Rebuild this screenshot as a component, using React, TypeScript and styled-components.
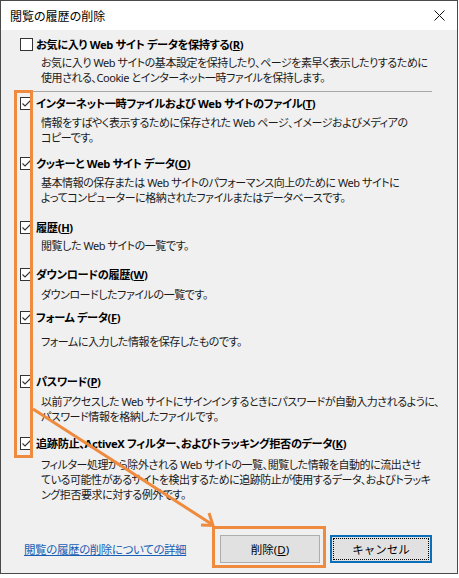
import React, { ReactElement } from 'react';
import styled, { createGlobalStyle } from 'styled-components';

const GlobalStyle = createGlobalStyle`
  html, body {
    margin: 0;
    padding: 0;
    background: #fff;
  }
  body {
    font-family: "Noto Sans", "Noto Sans CJK JP", sans-serif;
    font-feature-settings: "palt";
  }
`;

const Dialog = styled.div`
  position: relative;
  box-sizing: border-box;
  width: 458px;
  height: 574px;
  border: 1px solid #4a4a4a;
  background: #f0f0f0;
  display: flex;
  flex-direction: column;
  color: #000;
  overflow: hidden;
`;

const TitleBar = styled.div`
  height: 29px;
  background: #fff;
  display: flex;
  align-items: center;
  justify-content: space-between;
  padding: 0 12px 0 9px;
  font-size: 12px;
`;

const CloseIcon = styled.svg`
  width: 11px;
  height: 11px;
`;

const Body = styled.div`
  flex: 1;
  padding-left: 19px;
  display: flex;
  flex-direction: column;
`;

const Item = styled.div<{ $gap: number }>`
  margin-top: ${(p) => p.$gap}px;
`;

const LabelRow = styled.div`
  display: flex;
  align-items: center;
  gap: 3px;
  height: 18px;
  font-size: 11.2px;
  font-weight: 700;
  letter-spacing: -0.35px;
  white-space: nowrap;
`;

const Box = styled.span`
  box-sizing: border-box;
  flex: none;
  width: 13px;
  height: 13px;
  border: 1px solid #333;
  background: #fff;
  display: flex;
  align-items: center;
  justify-content: center;
`;

const Desc = styled.div<{ $gap: number }>`
  margin-top: ${(p) => p.$gap}px;
  padding-left: 21px;
  font-size: 11px;
  letter-spacing: -0.45px;
  line-height: 15px;
  white-space: nowrap;
  color: #1a1a1a;
`;

const Divider = styled.div`
  margin: 6px 0 0 -3px;
  width: 415px;
  height: 1px;
  background: #a8a8a8;
`;

const Footer = styled.div`
  display: flex;
  align-items: center;
  justify-content: space-between;
  padding: 0 25px 10px 23px;
`;

const HelpLink = styled.a`
  font-size: 11.5px;
  letter-spacing: -0.4px;
  color: #1a5fb4;
  text-decoration: underline;
  cursor: pointer;
`;

const Buttons = styled.div`
  display: flex;
  gap: 10px;
`;

const Button = styled.button<{ $default?: boolean }>`
  box-sizing: border-box;
  position: relative;
  width: ${(p) => (p.$default ? 102 : 100)}px;
  height: 28px;
  font-family: inherit;
  font-size: 11.5px;
  color: #000;
  background: #e1e1e1;
  border: ${(p) => (p.$default ? '2px solid #0a6eb8' : '1px solid #adadad')};
  padding: 0;
  &::after {
    content: '';
    display: ${(p) => (p.$default ? 'block' : 'none')};
    position: absolute;
    inset: 1px;
    border: 1px dotted #000;
  }
`;

const Overlay = styled.svg`
  position: absolute;
  left: -1px;
  top: -1px;
  width: 458px;
  height: 574px;
  pointer-events: none;
`;

interface IItem {
  label: string;
  key: string;
  checked: boolean;
  desc: string[];
  gap: number;
  descGap: number;
}

const items: IItem[] = [
  {
    label: 'お気に入り Web サイト データを保持する',
    key: 'R',
    checked: false,
    desc: [
      'お気に入り Web サイトの基本設定を保持したり、ページを素早く表示したりするために',
      '使用される、Cookie とインターネット一時ファイルを保持します。',
    ],
    gap: 5,
    descGap: 2,
  },
  {
    label: 'インターネット一時ファイルおよび Web サイトのファイル',
    key: 'T',
    checked: true,
    desc: ['情報をすばやく表示するために保存された Web ページ、イメージおよびメディアの', 'コピーです。'],
    gap: 2,
    descGap: 3,
  },
  {
    label: 'クッキーと Web サイト データ',
    key: 'O',
    checked: true,
    desc: [
      '基本情報の保存または Web サイトのパフォーマンス向上のために Web サイトに',
      'よってコンピューターに格納されたファイルまたはデータベースです。',
    ],
    gap: 9,
    descGap: 3,
  },
  { label: '履歴', key: 'H', checked: true, desc: ['閲覧した Web サイトの一覧です。'], gap: 13, descGap: 2 },
  {
    label: 'ダウンロードの履歴',
    key: 'W',
    checked: true,
    desc: ['ダウンロードしたファイルの一覧です。'],
    gap: 12,
    descGap: 4,
  },
  { label: 'フォーム データ', key: 'F', checked: true, desc: ['フォームに入力した情報を保存したものです。'], gap: 6, descGap: 8 },
  {
    label: 'パスワード',
    key: 'P',
    checked: true,
    desc: [
      '以前アクセスした Web サイトにサインインするときにパスワードが自動入力されるように、',
      'パスワード情報を格納したファイルです。',
    ],
    gap: 23,
    descGap: 4,
  },
  {
    label: '追跡防止、ActiveX フィルター、およびトラッキング拒否のデータ',
    key: 'K',
    checked: true,
    desc: [
      'フィルター処理から除外される Web サイトの一覧、閲覧した情報を自動的に流出させ',
      'ている可能性があるサイトを検出するために追跡防止が使用するデータ、およびトラッキ',
      'ング拒否要求に対する例外です。',
    ],
    gap: 10,
    descGap: 5,
  },
];

const Check = ({ checked }: { checked: boolean }): ReactElement => (
  <Box>
    {checked && (
      <svg width="11" height="11" viewBox="0 0 11 11">
        <polyline points="1.5,5.5 4,8 9.5,2.5" fill="none" stroke="#333" strokeWidth="1.1" />
      </svg>
    )}
  </Box>
);

const orange = '#ee8b3e';

const App = (): ReactElement => (
  <>
    <GlobalStyle />
    <Dialog>
      <TitleBar>
        <span>閲覧の履歴の削除</span>
        <CloseIcon viewBox="0 0 11 11">
          <path d="M0.5 0.5 L10.5 10.5 M10.5 0.5 L0.5 10.5" stroke="#111" strokeWidth="1" />
        </CloseIcon>
      </TitleBar>
      <Body>
        {items.map((item, i) => (
          <React.Fragment key={item.key}>
            <Item $gap={item.gap}>
              <LabelRow>
                <Check checked={item.checked} />
                <span>
                  {item.label}(<u>{item.key}</u>)
                </span>
              </LabelRow>
              <Desc $gap={item.descGap}>
                {item.desc.map((line) => (
                  <div key={line}>{line}</div>
                ))}
              </Desc>
            </Item>
            {i === 0 && <Divider />}
          </React.Fragment>
        ))}
      </Body>
      <Footer>
        <HelpLink>閲覧の履歴の削除についての詳細</HelpLink>
        <Buttons>
          <Button>
            削除(<u>D</u>)
          </Button>
          <Button $default>キャンセル</Button>
        </Buttons>
      </Footer>
      <Overlay viewBox="0 0 458 574">
        <rect x="15.5" y="91.5" width="16" height="365" fill="none" stroke={orange} strokeWidth="3" />
        <line x1="33" y1="409" x2="213" y2="525" stroke={orange} strokeWidth="3" />
        <polyline points="201,525 213,525.5 209,513" fill="none" stroke={orange} strokeWidth="3" />
        <rect x="213.5" y="527.5" width="111" height="39" fill="none" stroke={orange} strokeWidth="3" />
      </Overlay>
    </Dialog>
  </>
);

export default App;
